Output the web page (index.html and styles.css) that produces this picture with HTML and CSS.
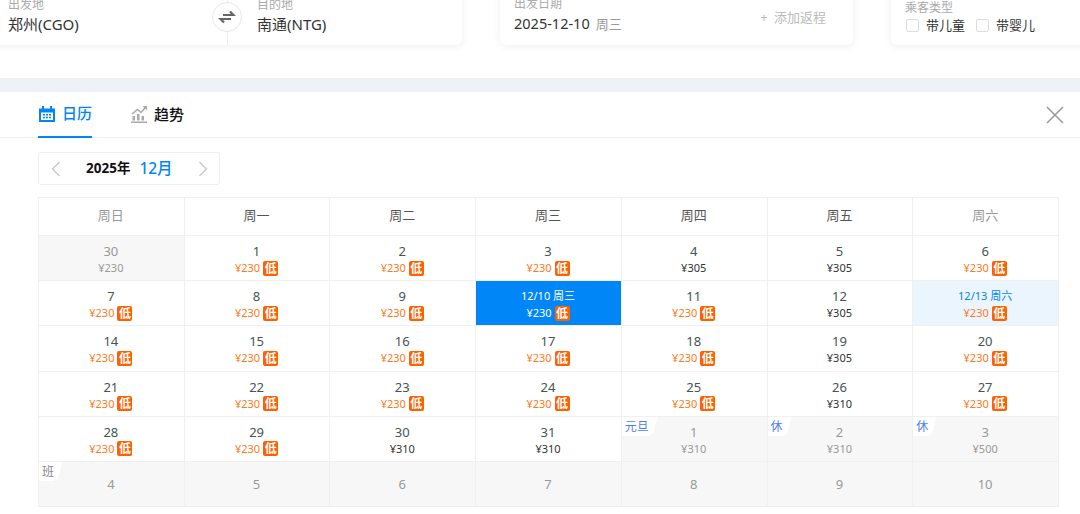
FILE: index.html
```html
<!DOCTYPE html>
<html lang="zh-CN">
<head>
    <meta charset="UTF-8">
    <meta name="viewport" content="width=device-width, initial-scale=1.0">
    <title>日历</title>
    <link rel="stylesheet" href="styles.css">
</head>
<body>
    <header class="search">
        <div class="card card--route">
            <div class="field field--from">
                <span class="field__label">出发地</span>
                <span class="field__value">郑州(CGO)</span>
            </div>
            <div class="field field--to">
                <span class="field__label">目的地</span>
                <span class="field__value">南通(NTG)</span>
            </div>
            <button class="swap" type="button" aria-label="交换">
                <svg viewBox="0 0 18 14" width="18" height="14" aria-hidden="true">
                    <path d="M5 5 H15.5 L12 1.4" fill="none" stroke="#666" stroke-width="2.2"/>
                    <path d="M13 9 H2.5 L6 12.6" fill="none" stroke="#666" stroke-width="2.2"/>
                </svg>
            </button>
        </div>
        <div class="card card--date">
            <div class="field">
                <span class="field__label">出发日期</span>
                <span class="field__value">2025-12-10<small class="field__week">周三</small></span>
            </div>
            <span class="add-return">+ 添加返程</span>
        </div>
        <div class="card card--pax">
            <span class="field__label">乘客类型</span>
            <div class="pax">
                <label class="pax__item"><i class="pax__box"></i>带儿童</label>
                <label class="pax__item"><i class="pax__box"></i>带婴儿</label>
            </div>
        </div>
    </header>

    <main class="panel">
        <nav class="tabs">
            <a class="tab tab--active">
                <svg viewBox="0 0 18 18" width="18" height="18" aria-hidden="true">
                    <path d="M1 3.5 H4 V1 H6 V3.5 H12 V1 H14 V3.5 H17 V17 H1 Z M3 7.5 V15 H15 V7.5 Z" fill="#0086f6" fill-rule="evenodd"/>
                    <path d="M5 9 H7 V10.5 H5 Z M8 9 H10 V10.5 H8 Z M11 9 H13 V10.5 H11 Z M5 11.8 H7 V13.3 H5 Z M8 11.8 H10 V13.3 H8 Z M11 11.8 H13 V13.3 H11 Z" fill="#0086f6"/>
                </svg>
                日历
            </a>
            <a class="tab">
                <svg viewBox="0 0 18 18" width="18" height="18" aria-hidden="true">
                    <path d="M1 16.5 H17 V18 H1 Z M2.5 11 H5 V15.5 H2.5 Z M7 9 H9.5 V15.5 H7 Z M11.5 11 H14 V15.5 H11.5 Z" fill="#aaa"/>
                    <path d="M2 9 L7.5 4.5 L11 7.5 L15.5 2.5" fill="none" stroke="#aaa" stroke-width="1.6"/>
                    <path d="M12.5 1 H17 V5.5 Z" fill="#aaa"/>
                </svg>
                趋势
            </a>
            <button class="close" type="button" aria-label="关闭">
                <svg viewBox="0 0 18 18" width="18" height="18" aria-hidden="true">
                    <path d="M1 1 L17 17 M17 1 L1 17" fill="none" stroke="#999" stroke-width="1.5"/>
                </svg>
            </button>
        </nav>

        <div class="month">
            <svg class="month__arrow" viewBox="0 0 10 16" width="10" height="16" aria-hidden="true"><path d="M8.5 1 L1.5 8 L8.5 15" fill="none" stroke="#ccc" stroke-width="1.5"/></svg>
            <span class="month__year">2025年</span>
            <span class="month__name">12月</span>
            <svg class="month__arrow" viewBox="0 0 10 16" width="10" height="16" aria-hidden="true"><path d="M1.5 1 L8.5 8 L1.5 15" fill="none" stroke="#ccc" stroke-width="1.5"/></svg>
        </div>

        <section class="calendar">
            <div class="head head--weekend">周日</div>
            <div class="head">周一</div>
            <div class="head">周二</div>
            <div class="head">周三</div>
            <div class="head">周四</div>
            <div class="head">周五</div>
            <div class="head head--weekend">周六</div>

            <div class="day day--off"><b class="day__num">30</b><span class="day__price">¥230</span></div>
            <div class="day"><b class="day__num">1</b><span class="day__price day__price--low">¥230<em class="low">低</em></span></div>
            <div class="day"><b class="day__num">2</b><span class="day__price day__price--low">¥230<em class="low">低</em></span></div>
            <div class="day"><b class="day__num">3</b><span class="day__price day__price--low">¥230<em class="low">低</em></span></div>
            <div class="day"><b class="day__num">4</b><span class="day__price">¥305</span></div>
            <div class="day"><b class="day__num">5</b><span class="day__price">¥305</span></div>
            <div class="day"><b class="day__num">6</b><span class="day__price day__price--low">¥230<em class="low">低</em></span></div>

            <div class="day"><b class="day__num">7</b><span class="day__price day__price--low">¥230<em class="low">低</em></span></div>
            <div class="day"><b class="day__num">8</b><span class="day__price day__price--low">¥230<em class="low">低</em></span></div>
            <div class="day"><b class="day__num">9</b><span class="day__price day__price--low">¥230<em class="low">低</em></span></div>
            <div class="day day--selected"><b class="day__num">12/10 周三</b><span class="day__price">¥230<em class="low">低</em></span></div>
            <div class="day"><b class="day__num">11</b><span class="day__price day__price--low">¥230<em class="low">低</em></span></div>
            <div class="day"><b class="day__num">12</b><span class="day__price">¥305</span></div>
            <div class="day day--return"><b class="day__num">12/13 周六</b><span class="day__price day__price--low">¥230<em class="low">低</em></span></div>

            <div class="day"><b class="day__num">14</b><span class="day__price day__price--low">¥230<em class="low">低</em></span></div>
            <div class="day"><b class="day__num">15</b><span class="day__price day__price--low">¥230<em class="low">低</em></span></div>
            <div class="day"><b class="day__num">16</b><span class="day__price day__price--low">¥230<em class="low">低</em></span></div>
            <div class="day"><b class="day__num">17</b><span class="day__price day__price--low">¥230<em class="low">低</em></span></div>
            <div class="day"><b class="day__num">18</b><span class="day__price day__price--low">¥230<em class="low">低</em></span></div>
            <div class="day"><b class="day__num">19</b><span class="day__price">¥305</span></div>
            <div class="day"><b class="day__num">20</b><span class="day__price day__price--low">¥230<em class="low">低</em></span></div>

            <div class="day"><b class="day__num">21</b><span class="day__price day__price--low">¥230<em class="low">低</em></span></div>
            <div class="day"><b class="day__num">22</b><span class="day__price day__price--low">¥230<em class="low">低</em></span></div>
            <div class="day"><b class="day__num">23</b><span class="day__price day__price--low">¥230<em class="low">低</em></span></div>
            <div class="day"><b class="day__num">24</b><span class="day__price day__price--low">¥230<em class="low">低</em></span></div>
            <div class="day"><b class="day__num">25</b><span class="day__price day__price--low">¥230<em class="low">低</em></span></div>
            <div class="day"><b class="day__num">26</b><span class="day__price">¥310</span></div>
            <div class="day"><b class="day__num">27</b><span class="day__price day__price--low">¥230<em class="low">低</em></span></div>

            <div class="day"><b class="day__num">28</b><span class="day__price day__price--low">¥230<em class="low">低</em></span></div>
            <div class="day"><b class="day__num">29</b><span class="day__price day__price--low">¥230<em class="low">低</em></span></div>
            <div class="day"><b class="day__num">30</b><span class="day__price">¥310</span></div>
            <div class="day"><b class="day__num">31</b><span class="day__price">¥310</span></div>
            <div class="day day--off"><span class="tag tag--holiday">元旦</span><b class="day__num">1</b><span class="day__price">¥310</span></div>
            <div class="day day--off"><span class="tag tag--holiday">休</span><b class="day__num">2</b><span class="day__price">¥310</span></div>
            <div class="day day--off"><span class="tag tag--holiday">休</span><b class="day__num">3</b><span class="day__price">¥500</span></div>

            <div class="day day--off"><span class="tag">班</span><b class="day__num">4</b></div>
            <div class="day day--off"><b class="day__num">5</b></div>
            <div class="day day--off"><b class="day__num">6</b></div>
            <div class="day day--off"><b class="day__num">7</b></div>
            <div class="day day--off"><b class="day__num">8</b></div>
            <div class="day day--off"><b class="day__num">9</b></div>
            <div class="day day--off"><b class="day__num">10</b></div>
        </section>
    </main>
</body>
</html>
```

FILE: styles.css
```css
* {
    box-sizing: border-box;
    margin: 0;
    padding: 0;
}
:root {
    --blue: #0086f6;
    --orange: #ff7a1a;
    --line: #f0f0f0;
}
body {
    background: #fff;
    color: #333;
    font: 13px/1.4 "Noto Sans", "Noto Sans CJK SC", sans-serif;
    height: 514px;
    overflow: hidden;
}
button {
    background: none;
    border: 0;
    cursor: pointer;
}

/* Search bar, scrolled so the top of the cards is cut off */
.search {
    align-items: flex-end;
    display: flex;
    gap: 38px;
    height: 78px;
    margin-left: -10px;
    overflow: hidden;
    padding-bottom: 33px;
}
.card {
    background: #fff;
    border-radius: 6px;
    box-shadow: 0 1px 8px rgba(0,0,0,0.07);
    flex: none;
    height: 70px;
}
.card--route {
    display: flex;
    position: relative;
    width: 472px;
}
.card--date {
    align-items: flex-end;
    display: flex;
    justify-content: space-between;
    padding: 0 27px 0 14px;
    width: 353px;
}
.card--pax {
    display: flex;
    flex-direction: column;
    justify-content: flex-end;
    padding: 0 0 11px 14px;
    width: 220px;
}
.card--pax .field__label {
    line-height: 16px;
}
.field {
    display: flex;
    flex-direction: column;
    justify-content: flex-end;
    padding-bottom: 10px;
}
.field--from {
    border-right: 1px solid #eee;
    padding-left: 18px;
    width: 238px;
}
.field--to {
    padding-left: 29px;
}
.field__label {
    color: #aaa;
    font-size: 12px;
    line-height: 17px;
}
.field__value {
    color: #333;
    font-size: 14.5px;
    line-height: 22px;
}
.card--route .field__value {
    font-size: 15px;
}
.field__week {
    color: #999;
    font-size: 13px;
    margin-left: 6px;
}
.add-return {
    color: #bbb;
    font-size: 13px;
    padding-bottom: 19px;
    word-spacing: 3px;
}
.swap {
    align-items: center;
    background: #fff;
    border: 1px solid #e8e8e8;
    border-radius: 50%;
    display: flex;
    height: 30px;
    justify-content: center;
    left: 222px;
    position: absolute;
    top: 27px;
    width: 30px;
}
.pax {
    display: flex;
    gap: 10px;
}
.pax__item {
    align-items: center;
    color: #333;
    display: flex;
    font-size: 13px;
    gap: 7px;
    line-height: 18px;
}
.pax__box {
    border: 1px solid #ddd;
    border-radius: 2px;
    height: 13px;
    margin-left: 1px;
    width: 13px;
}

/* Calendar panel */
.panel {
    border-top: 14px solid #eef1f5;
    padding: 0 21px 0 38px;
}
.tabs {
    align-items: stretch;
    border-bottom: 1px solid var(--line);
    display: flex;
    gap: 38px;
    height: 46px;
    margin: 0 -21px 14px -38px;
    padding-left: 38px;
    position: relative;
}
.tab {
    align-items: center;
    color: #111;
    display: flex;
    font-size: 15px;
    font-weight: 500;
    gap: 6px;
    padding-bottom: 1px;
}
.tab--active {
    border-bottom: 2px solid var(--blue);
    color: var(--blue);
    margin-bottom: -1px;
}
.close {
    position: absolute;
    right: 16px;
    top: 14px;
}
.month {
    align-items: center;
    border: 1px solid #eee;
    border-radius: 3px;
    display: flex;
    height: 33px;
    padding: 0 12px;
    width: 182px;
}
.month__arrow:last-child {
    margin-left: auto;
    margin-right: -1px;
}
.month__year {
    color: #111;
    font-size: 13.5px;
    font-weight: 700;
    margin-left: 25px;
}
.month__name {
    color: var(--blue);
    font-size: 15.5px;
    font-weight: 500;
    margin-left: 9px;
}

.calendar {
    border-left: 1px solid var(--line);
    border-top: 1px solid var(--line);
    display: grid;
    grid-template-columns: repeat(7, 1fr);
    grid-template-rows: 38px repeat(6, 1fr);
    height: 310px;
    margin-top: 12px;
    width: 1021px;
}
.head,
.day {
    border-bottom: 1px solid var(--line);
    border-right: 1px solid var(--line);
    padding-right: 1px;
}
.head {
    align-items: center;
    color: #555;
    display: flex;
    justify-content: center;
    padding-bottom: 2px;
}
.head--weekend {
    color: #999;
}
.day {
    align-items: center;
    display: flex;
    flex-direction: column;
    justify-content: center;
    overflow: hidden;
    position: relative;
}
.day__num {
    color: #455;
    font-size: 13px;
    font-weight: 400;
    line-height: 18px;
}
.day__price {
    align-items: center;
    color: #333;
    display: flex;
    font-size: 11px;
    gap: 3px;
    line-height: 16px;
    margin-bottom: -2px;
}
.day__price--low {
    color: var(--orange);
}
.low {
    background: #ff6000;
    border-radius: 2px;
    color: #fff;
    font-size: 12px;
    font-style: normal;
    font-weight: 700;
    height: 15px;
    line-height: 15px;
    text-align: center;
    width: 15px;
}
.day--off {
    background: #f7f7f7;
}
.day--off .day__num,
.day--off .day__price {
    color: #999;
}
.day--selected {
    background: var(--blue);
}
.day--selected .day__num,
.day--selected .day__price {
    color: #fff;
}
.day--selected .day__num,
.day--return .day__num {
    font-size: 11px;
}
.day--return {
    background: #ebf5fd;
}
.day--return .day__num {
    color: var(--blue);
}

/* Corner tag with a slanted right edge */
.tag {
    color: #888;
    font-size: 12px;
    left: 3px;
    line-height: 19px;
    position: absolute;
    top: 0;
    z-index: 0;
}
.tag::before {
    background: #fff;
    border-radius: 0 0 5px 0;
    bottom: 0;
    content: "";
    left: -8px;
    position: absolute;
    right: -6px;
    top: 0;
    transform: skewX(-14deg);
    z-index: -1;
}
.tag--holiday {
    color: #4d7df0;
}
```
